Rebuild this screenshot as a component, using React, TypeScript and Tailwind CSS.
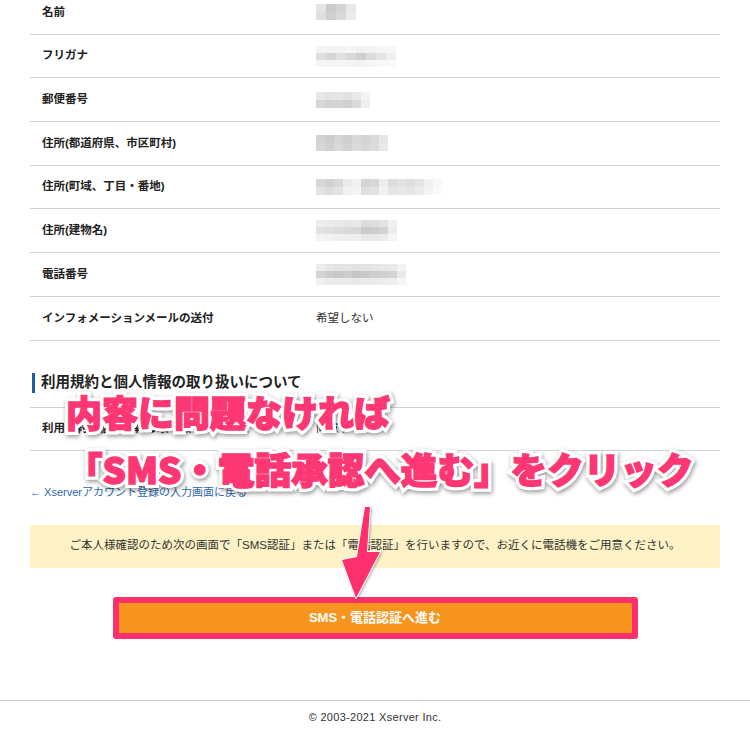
import React from 'react';

type Shade = string[][];

const Mosaic = ({ cells, w = 10, h = 8 }: { cells: Shade; w?: number; h?: number }) => (
  <div className="flex flex-col blur-[0.7px]">
    {cells.map((row, i) => (
      <div key={i} className="flex">
        {row.map((c, j) => (
          <div key={j} style={{ width: w, height: h, background: c }} />
        ))}
      </div>
    ))}
  </div>
);

const rows: { label: string; value: React.ReactNode }[] = [
  {
    label: '名前',
    value: (
      <Mosaic
        w={10}
        h={8}
        cells={[
          ['#e4e4e4', '#cacaca', '#d4d4d4', '#e8e8e8'],
          ['#e0e0e0', '#cfcfcf', '#d9d9d9', '#ececec'],
        ]}
      />
    ),
  },
  {
    label: 'フリガナ',
    value: (
      <Mosaic
        w={10}
        h={7}
        cells={[
          ['#f4f4f4', '#f2f2f2', '#f3f3f3', '#f5f5f5', '#f1f1f1', '#f3f3f3', '#f6f6f6', '#f8f8f8'],
          ['#dedede', '#d6d6d6', '#e0e0e0', '#d9d9d9', '#cfcfcf', '#dcdcdc', '#e4e4e4', '#efefef'],
          ['#f5f5f5', '#f4f4f4', '#f6f6f6', '#f4f4f4', '#f3f3f3', '#f6f6f6', '#f8f8f8', '#fafafa'],
        ]}
      />
    ),
  },
  {
    label: '郵便番号',
    value: (
      <Mosaic
        w={9}
        h={8}
        cells={[
          ['#e7e7e7', '#e3e3e3', '#e5e5e5', '#e2e2e2', '#e9e9e9', '#f3f3f3'],
          ['#d7d7d7', '#d2d2d2', '#d4d4d4', '#d0d0d0', '#dadada', '#eeeeee'],
        ]}
      />
    ),
  },
  {
    label: '住所(都道府県、市区町村)',
    value: (
      <Mosaic
        w={9}
        h={8}
        cells={[
          ['#d2d2d2', '#cccccc', '#d5d5d5', '#cfcfcf', '#d8d8d8', '#d3d3d3', '#dadada', '#e6e6e6'],
          ['#d6d6d6', '#d0d0d0', '#d9d9d9', '#d2d2d2', '#dbdbdb', '#d6d6d6', '#dcdcdc', '#e9e9e9'],
        ]}
      />
    ),
  },
  {
    label: '住所(町域、丁目・番地)',
    value: (
      <Mosaic
        w={9}
        h={8}
        cells={[
          ['#d7d7d7', '#d1d1d1', '#d9d9d9', '#ececec', '#f2f2f2', '#d4d4d4', '#d8d8d8', '#eeeeee', '#dcdcdc', '#e2e2e2', '#dddddd', '#e4e4e4', '#f1f1f1', '#f8f8f8'],
          ['#e2e2e2', '#dddddd', '#e3e3e3', '#f1f1f1', '#f4f4f4', '#dfdfdf', '#e2e2e2', '#f2f2f2', '#e5e5e5', '#e8e8e8', '#e5e5e5', '#ebebeb', '#f4f4f4', '#fafafa'],
        ]}
      />
    ),
  },
  {
    label: '住所(建物名)',
    value: (
      <Mosaic
        w={9}
        h={7}
        cells={[
          ['#eeeeee', '#ececec', '#e9e9e9', '#e6e6e6', '#e8e8e8', '#dcdcdc', '#dedede', '#e2e2e2', '#f0f0f0'],
          ['#e3e3e3', '#dfdfdf', '#dcdcdc', '#dadada', '#d8d8d8', '#cbcbcb', '#cdcdcd', '#d3d3d3', '#ececec'],
          ['#f3f3f3', '#f1f1f1', '#efefef', '#eeeeee', '#eeeeee', '#e8e8e8', '#e9e9e9', '#ebebeb', '#f5f5f5'],
        ]}
      />
    ),
  },
  {
    label: '電話番号',
    value: (
      <Mosaic
        w={9}
        h={7}
        cells={[
          ['#ececec', '#e6e6e6', '#e3e3e3', '#e5e5e5', '#e2e2e2', '#e4e4e4', '#e6e6e6', '#e8e8e8', '#eaeaea', '#f3f3f3'],
          ['#d3d3d3', '#cbcbcb', '#c8c8c8', '#cccccc', '#c6c6c6', '#c9c9c9', '#cdcdcd', '#cfcfcf', '#d3d3d3', '#e9e9e9'],
          ['#f0f0f0', '#ececec', '#eaeaea', '#ebebeb', '#e9e9e9', '#eaeaea', '#ececec', '#ededed', '#efefef', '#f6f6f6'],
        ]}
      />
    ),
  },
  { label: 'インフォメーションメールの送付', value: <span>希望しない</span> },
];

const Row = ({ label, value, top = false }: { label: string; value: React.ReactNode; top?: boolean }) => (
  <div
    className={
      top
        ? 'flex items-center h-[44px] border-y border-[#d3d3d3]'
        : 'flex items-center h-[43.7px] border-b border-[#d3d3d3]'
    }
  >
    <div className="w-[286px] pl-[12px] text-[11.5px] font-bold text-[#222]">{label}</div>
    <div className="text-[11.5px] text-[#333]">{value}</div>
  </div>
);

// annotation text: white halo layer behind, pink fill with a thin pink stroke in front
const Callout = ({ text, className }: { text: string; className: string }) => (
  <div className={className}>
    <div className="grid whitespace-nowrap leading-none font-black font-['Noto_Sans_CJK_JP',sans-serif]">
      <span className="col-start-1 row-start-1 relative z-0 text-white [-webkit-text-stroke:8px_white] drop-shadow-[1px_2px_2px_rgba(0,0,0,0.4)]">
        {text}
      </span>
      <span className="col-start-1 row-start-1 relative z-10 text-[#fc3773] [-webkit-text-stroke:1.5px_#fc3773]">
        {text}
      </span>
    </div>
  </div>
);

export default function App() {
  return (
    <div className="relative w-[750px] h-[732px] overflow-hidden bg-white font-['Liberation_Sans','Noto_Sans_CJK_JP',sans-serif]">
      <div className="px-[30px]">
        <div className="-mt-[9px]">
          {rows.map((r) => (
            <Row key={r.label} label={r.label} value={r.value} />
          ))}
        </div>

        <div className="mt-[32px] ml-[2px] flex items-center h-[20px] border-l-[3px] border-[#1d5ca6] pl-[6px]">
          <h2 className="text-[14.5px] font-bold text-[#222] leading-none">
            利用規約と個人情報の取り扱いについて
          </h2>
        </div>

        <div className="mt-[14px]">
          <Row top label="利用規約と個人情報の取り扱いへの同意" value={<span>同意する</span>} />
        </div>

        <a className="mt-[33px] block w-fit text-[11px] leading-[16px] text-[#2b66ae]">
          ← Xserverアカウント登録の入力画面に戻る
        </a>

        <div className="mt-[25px] h-[43px] flex items-center justify-center bg-[#fdf2c5] text-[11.5px] text-[#333]">
          ご本人様確認のため次の画面で「SMS認証」または「電話認証」を行いますので、お近くに電話機をご用意ください。
        </div>

        <div className="mt-[29px] flex justify-center">
          <button className="w-[525px] h-[42px] rounded-[3px] border-[6px] border-[#fe2f6d] bg-[#f7941e] text-white text-[13px] font-bold">
            SMS・電話認証へ進む
          </button>
        </div>
      </div>

      <footer className="mt-[61px] border-t border-[#c8c8c8] pt-[9px] text-center text-[11px] leading-[14px] tracking-[0.3px] text-[#333]">
        © 2003-2021 Xserver Inc.
      </footer>

      <Callout text="内容に問題なければ" className="absolute left-[66px] top-[393px] text-[36px]" />
      <Callout text="「SMS・電話承認へ進む」をクリック" className="absolute left-[66px] top-[451px] text-[36.6px]" />

      <svg
        className="absolute left-0 top-0 drop-shadow-[1px_1px_1px_rgba(0,0,0,0.3)]"
        width="750"
        height="732"
        viewBox="0 0 750 732"
      >
        <polygon
          points="365,507 370,507 367,552 380,552 356,598 342,560 357,557"
          fill="#fe2f6d"
          stroke="#ffffff"
          strokeWidth="2"
          strokeLinejoin="round"
          paintOrder="stroke fill"
        />
      </svg>
    </div>
  );
}
